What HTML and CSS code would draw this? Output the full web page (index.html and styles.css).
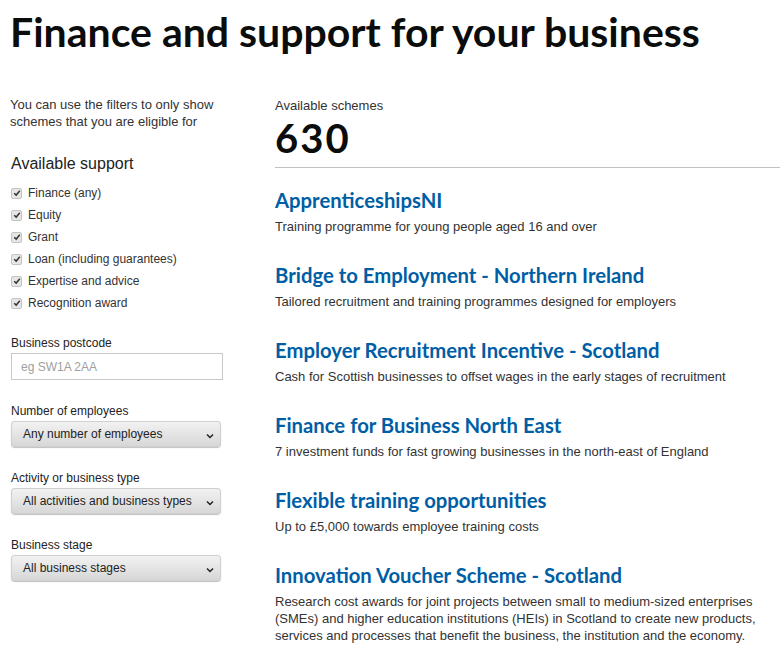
FILE: index.html
```html
<!DOCTYPE html>
<html lang="en">
<head>
<meta charset="utf-8">
<title>Finance and support for your business</title>
<link rel="stylesheet" href="styles.css">
</head>
<body>
<h1 class="page-title">Finance and support for your business</h1>
<div class="layout">
  <aside class="filters">
    <p class="intro">You can use the filters to only show schemes that you are eligible for</p>
    <h2 class="filter-heading">Available support</h2>
    <ul class="checks">
      <li><span class="box"><svg viewBox="0 0 10 10" width="8" height="8"><path d="M1.5 5.2 L4 7.6 L8.5 2.2" fill="none" stroke="#333" stroke-width="1.8"/></svg></span>Finance (any)</li>
      <li><span class="box"><svg viewBox="0 0 10 10" width="8" height="8"><path d="M1.5 5.2 L4 7.6 L8.5 2.2" fill="none" stroke="#333" stroke-width="1.8"/></svg></span>Equity</li>
      <li><span class="box"><svg viewBox="0 0 10 10" width="8" height="8"><path d="M1.5 5.2 L4 7.6 L8.5 2.2" fill="none" stroke="#333" stroke-width="1.8"/></svg></span>Grant</li>
      <li><span class="box"><svg viewBox="0 0 10 10" width="8" height="8"><path d="M1.5 5.2 L4 7.6 L8.5 2.2" fill="none" stroke="#333" stroke-width="1.8"/></svg></span>Loan (including guarantees)</li>
      <li><span class="box"><svg viewBox="0 0 10 10" width="8" height="8"><path d="M1.5 5.2 L4 7.6 L8.5 2.2" fill="none" stroke="#333" stroke-width="1.8"/></svg></span>Expertise and advice</li>
      <li><span class="box"><svg viewBox="0 0 10 10" width="8" height="8"><path d="M1.5 5.2 L4 7.6 L8.5 2.2" fill="none" stroke="#333" stroke-width="1.8"/></svg></span>Recognition award</li>
    </ul>
    <div class="field field-postcode">
      <div class="label">Business postcode</div>
      <div class="input"><span class="placeholder">eg SW1A 2AA</span></div>
    </div>
    <div class="field">
      <div class="label">Number of employees</div>
      <div class="select"><span>Any number of employees</span><svg class="chev" viewBox="0 0 8 6" width="8" height="6"><path d="M1 1.5 L4 4.5 L7 1.5" fill="none" stroke="#222" stroke-width="1.5"/></svg></div>
    </div>
    <div class="field">
      <div class="label">Activity or business type</div>
      <div class="select"><span>All activities and business types</span><svg class="chev" viewBox="0 0 8 6" width="8" height="6"><path d="M1 1.5 L4 4.5 L7 1.5" fill="none" stroke="#222" stroke-width="1.5"/></svg></div>
    </div>
    <div class="field">
      <div class="label">Business stage</div>
      <div class="select"><span>All business stages</span><svg class="chev" viewBox="0 0 8 6" width="8" height="6"><path d="M1 1.5 L4 4.5 L7 1.5" fill="none" stroke="#222" stroke-width="1.5"/></svg></div>
    </div>
  </aside>
  <main class="results">
    <div class="count-label">Available schemes</div>
    <div class="count">630</div>
    <hr class="rule">
    <ul class="schemes">
      <li><a class="scheme-title" href="#">ApprenticeshipsNI</a><p>Training programme for young people aged 16 and over</p></li>
      <li><a class="scheme-title" href="#">Bridge to Employment - Northern Ireland</a><p>Tailored recruitment and training programmes designed for employers</p></li>
      <li><a class="scheme-title" href="#">Employer Recruitment Incentive - Scotland</a><p>Cash for Scottish businesses to offset wages in the early stages of recruitment</p></li>
      <li><a class="scheme-title" href="#">Finance for Business North East</a><p>7 investment funds for fast growing businesses in the north-east of England</p></li>
      <li><a class="scheme-title" href="#">Flexible training opportunities</a><p>Up to £5,000 towards employee training costs</p></li>
      <li><a class="scheme-title" href="#">Innovation Voucher Scheme - Scotland</a><p>Research cost awards for joint projects between small to medium-sized enterprises (SMEs) and higher education institutions (HEIs) in Scotland to create new products, services and processes that benefit the business, the institution and the economy.</p></li>
    </ul>
  </main>
</div>
</body>
</html>
```

FILE: styles.css
```css
* { box-sizing: border-box; }
html, body { margin: 0; padding: 0; background: #fff; }
body {
  font-family: "Liberation Sans", Arial, sans-serif;
  color: #0b0c0c;
  width: 780px;
  height: 657px;
  overflow: hidden;
}
.page-title {
  margin: 0;
  padding: 8px 0 0 10px;
  font-family: Lato, "Liberation Sans", sans-serif;
  font-size: 41px;
  line-height: 48px;
  font-weight: 700;
  color: #0b0c0c;
  white-space: nowrap;
}
.layout {
  display: flex;
  margin-top: 40px;
}
.filters {
  width: 214px;
  margin-left: 10px;
  flex: none;
}
.intro {
  margin: 0;
  font-size: 13px;
  line-height: 17px;
  color: #333;
}
.filter-heading {
  margin: 24px 0 0 1px;
  font-size: 16px;
  line-height: 20px;
  font-weight: 400;
  color: #222;
}
.checks {
  list-style: none;
  margin: 8px 0 0 1px;
  padding: 0;
}
.checks li {
  display: flex;
  align-items: center;
  height: 22px;
  font-size: 12px;
  color: #333;
}
.box {
  width: 11px;
  height: 11px;
  background: #e6e6e6;
  border: 1px solid #c4c4c4;
  border-radius: 2px;
  display: flex;
  align-items: center;
  justify-content: center;
  margin-right: 6px;
}
.field { margin-top: 23px; }
.field-postcode { margin-top: 21px; }
.label {
  font-size: 12px;
  line-height: 16px;
  color: #222;
  margin-left: 1px;
}
.input {
  margin-top: 2px;
  margin-left: 1px;
  width: 212px;
  height: 27px;
  border: 1px solid #c8c8c8;
  display: flex;
  align-items: center;
  padding-left: 9px;
}
.placeholder { font-size: 12px; color: #a0a0a0; }
.select {
  margin-top: 2px;
  margin-left: 1px;
  width: 210px;
  height: 26px;
  border-radius: 4px;
  background: linear-gradient(#f3f3f3, #d6d6d6);
  box-shadow: 0 1px 1px rgba(0,0,0,0.25), inset 0 0 0 1px #d0d0d0;
  display: flex;
  align-items: center;
  justify-content: space-between;
  padding: 0 7px 0 12px;
  font-size: 12px;
  color: #222;
}
.chev { margin-top: 3px; }
.results {
  flex: 1;
  margin-left: 51px;
}
.count-label {
  font-size: 13px;
  line-height: 17px;
  color: #333;
  margin-top: 1px;
}
.count {
  font-family: Lato, "Liberation Sans", sans-serif;
  font-size: 40px;
  line-height: 40px;
  font-weight: 700;
  letter-spacing: 2px;
  margin-top: 4px;
}
.rule {
  border: 0;
  border-top: 1px solid #bfc1c3;
  margin: 9px 0 0 0;
}
.schemes {
  list-style: none;
  margin: 0;
  padding: 0;
}
.schemes li { padding-top: 20px; height: 75px; }
.scheme-title {
  display: block;
  font-family: Lato, "Liberation Sans", sans-serif;
  font-size: 20.3px;
  line-height: 24px;
  font-weight: 700;
  color: #005ea5;
  text-decoration: none;
}
.schemes p {
  margin: 6px 0 0 0;
  font-size: 13px;
  line-height: 17px;
  color: #333;
}
```
